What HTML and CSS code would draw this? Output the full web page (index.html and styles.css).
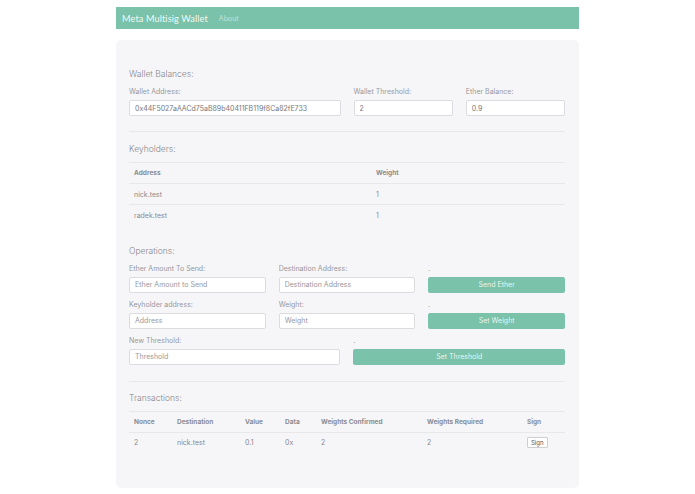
FILE: index.html
```html
<!DOCTYPE html>
<html lang="en">
<head>
    <meta charset="UTF-8">
    <meta name="viewport" content="width=device-width, initial-scale=1.0">
    <title>Meta Multisig Wallet</title>

    <link rel="stylesheet" href="styles.css">

</head>
<body>

    <nav class="navbar">
        <span class="brand">Meta Multisig Wallet</span>
        <a class="navLink" href="#">About</a>
    </nav>

    <section class="cartao">

        <h3 class="titulo">Wallet Balances:</h3>
        <div class="linha">
            <div class="campo col6">
                <label>Wallet Address:</label>
                <input type="text" class="cxTexto" value="0x44F5027aAACd75aB89b40411FB119f8Ca82fE733">
            </div>
            <div class="campo col3">
                <label>Wallet Threshold:</label>
                <input type="text" class="cxTexto" value="2">
            </div>
            <div class="campo col3">
                <label>Ether Balance:</label>
                <input type="text" class="cxTexto" value="0.9">
            </div>
        </div>

        <hr>

        <h3 class="titulo">Keyholders:</h3>
        <table class="tabela tabKey">
            <thead>
                <tr><th>Address</th><th>Weight</th></tr>
            </thead>
            <tbody>
                <tr><td>nick.test</td><td>1</td></tr>
                <tr><td>radek.test</td><td>1</td></tr>
            </tbody>
        </table>

        <h3 class="titulo titOps">Operations:</h3>
        <div class="linha">
            <div class="campo col4">
                <label>Ether Amount To Send:</label>
                <input type="text" class="cxTexto" placeholder="Ether Amount to Send">
            </div>
            <div class="campo col4">
                <label>Destination Address:</label>
                <input type="text" class="cxTexto" placeholder="Destination Address">
            </div>
            <div class="campo col4">
                <label>.</label>
                <button class="botao">Send Ether</button>
            </div>

            <div class="campo col4">
                <label>Keyholder address:</label>
                <input type="text" class="cxTexto" placeholder="Address">
            </div>
            <div class="campo col4">
                <label>Weight:</label>
                <input type="text" class="cxTexto" placeholder="Weight">
            </div>
            <div class="campo col4">
                <label>.</label>
                <button class="botao">Set Weight</button>
            </div>

            <div class="campo col6">
                <label>New Threshold:</label>
                <input type="text" class="cxTexto" placeholder="Threshold">
            </div>
            <div class="campo col6">
                <label>.</label>
                <button class="botao">Set Threshold</button>
            </div>
        </div>

        <hr class="hrTx">

        <h3 class="titulo">Transactions:</h3>
        <table class="tabela tabTx">
            <thead>
                <tr>
                    <th class="c1">Nonce</th>
                    <th class="c2">Destination</th>
                    <th class="c3">Value</th>
                    <th class="c4">Data</th>
                    <th class="c5">Weights Confirmed</th>
                    <th class="c6">Weights Required</th>
                    <th>Sign</th>
                </tr>
            </thead>
            <tbody>
                <tr>
                    <td>2</td>
                    <td>nick.test</td>
                    <td>0.1</td>
                    <td>0x</td>
                    <td>2</td>
                    <td>2</td>
                    <td><button class="botaoSign">Sign</button></td>
                </tr>
            </tbody>
        </table>

    </section>

</body>
</html>
```

FILE: styles.css
```css
@charset "utf-8";

*{
    padding: 0px;
    margin: 0px;
    box-sizing: border-box;
}
body{
    background-color: white;
    font-family: Inter, "Liberation Sans", Arial, sans-serif;
    color: #8a8a8e;
}
.navbar{
    width: 463px;
    height: 22px;
    margin: 7px auto 0px;
    padding-left: 6px;
    background-color: #7bc2ab;
    display: flex;
    align-items: center;
    gap: 11px;
}
.brand{
    font-family: Lato, "Noto Sans", sans-serif;
    font-size: 9.2px;
    color: rgba(255, 255, 255, 0.92);
    letter-spacing: 0.1px;
}
.navLink{
    font-size: 7px;
    color: rgba(255, 255, 255, 0.55);
    text-decoration: none;
}
.cartao{
    width: 463px;
    margin: 11px auto 0px;
    padding: 27px 14px 35px 13px;
    background-color: #f6f6f8;
    border-radius: 5px;
}
.titulo{
    font-size: 8.5px;
    font-weight: 300;
    line-height: 14px;
    color: #86868a;
    margin-bottom: 6px;
}
.titOps{
    margin-top: 18px;
}
.linha{
    display: grid;
    grid-template-columns: repeat(12, 1fr);
    column-gap: 13px;
}
.col3{ grid-column: span 3; }
.col4{ grid-column: span 4; }
.col6{ grid-column: span 6; }
.campo{
    display: flex;
    flex-direction: column;
    margin-bottom: 7px;
}
.campo label{
    font-size: 7px;
    line-height: 10px;
    color: #98989c;
    margin-bottom: 3px;
}
.cxTexto{
    height: 16px;
    padding: 0px 5px;
    font-family: inherit;
    font-size: 7px;
    color: #77777b;
    background-color: white;
    border: 1px solid #dcdcdf;
    border-radius: 2px;
    outline: none;
}
.cxTexto::placeholder{
    color: #98989c;
}
.botao{
    height: 16px;
    font-family: inherit;
    font-size: 7px;
    color: rgba(255, 255, 255, 0.85);
    background-color: #7bc2ab;
    border: none;
    border-radius: 2px;
}
hr{
    border: none;
    border-top: 1px solid #e8e8eb;
    margin: 8px 0px 10px;
}
.hrTx{
    margin: 9px 0px 9px;
}
.tabela{
    width: 100%;
    border-collapse: collapse;
    font-size: 7px;
    text-align: left;
}
.tabela th, .tabela td{
    height: 21px;
    padding: 0px 5px;
    border-top: 1px solid #e8e8eb;
    vertical-align: middle;
}
.tabela th{
    font-size: 6.5px;
    font-weight: 700;
    color: #8c8c90;
}
.tabKey th:first-child{
    width: 242px;
}
.tabTx .c1{ width: 43px; }
.tabTx .c2{ width: 68px; }
.tabTx .c3{ width: 40px; }
.tabTx .c4{ width: 36px; }
.tabTx .c5{ width: 106px; }
.tabTx .c6{ width: 100px; }
.botaoSign{
    font-family: inherit;
    font-size: 6px;
    color: #555;
    background-color: white;
    border: 1px solid #cfcfd2;
    padding: 1px 3px;
    border-radius: 1px;
}
```
